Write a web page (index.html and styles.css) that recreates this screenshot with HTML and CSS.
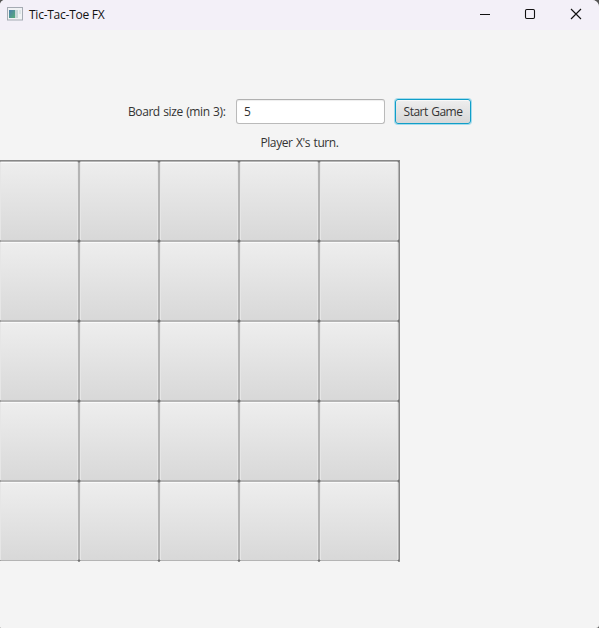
FILE: index.html
```
<!DOCTYPE html>
<html lang="en">
<head>
<meta charset="utf-8">
<title>Tic-Tac-Toe FX</title>
<link rel="stylesheet" href="styles.css">
</head>
<body>
<div class="window">
  <header class="titlebar">
    <svg class="app-icon" width="16" height="14" viewBox="0 0 16 14">
      <defs><linearGradient id="screen" x1="0" y1="0" x2="1" y2="1"><stop offset="0" stop-color="#4b7fad"/><stop offset="1" stop-color="#55ad78"/></linearGradient></defs>
      <rect x=".5" y=".5" width="15" height="12.500" fill="#f0f2f4" stroke="#a5abb3"/>
      <rect x="2" y="3" width="6" height="8" fill="url(#screen)"/>
      <rect x="8" y="3" width="3" height="8" fill="#c5d6d6"/>
      <rect x="12" y="3" width="2" height="4" fill="#dce4e6"/>
    </svg>
    <span class="title">Tic-Tac-Toe FX</span>
    <svg class="controls" width="120" height="28" viewBox="0 0 120 28" fill="none" stroke="#111">
      <path d="M1 14.5h10"/>
      <rect x="46.500" y="9.500" width="9" height="9" rx="1.200" stroke-width="1.100"/>
      <path d="M92 9l10 10M102 9l-10 10" stroke-width="1.150"/>
    </svg>
  </header>
  <main>
    <div class="settings">
      <label class="size-label" for="size">Board size (min 3):</label>
      <input class="size" id="size" value="5">
      <button class="start">Start Game</button>
    </div>
    <p class="status"><span>Player X's turn.</span></p>
    <div class="board">
      <div class="cell"></div><div class="cell"></div><div class="cell"></div><div class="cell"></div><div class="cell"></div>
      <div class="cell"></div><div class="cell"></div><div class="cell"></div><div class="cell"></div><div class="cell"></div>
      <div class="cell"></div><div class="cell"></div><div class="cell"></div><div class="cell"></div><div class="cell"></div>
      <div class="cell"></div><div class="cell"></div><div class="cell"></div><div class="cell"></div><div class="cell"></div>
      <div class="cell"></div><div class="cell"></div><div class="cell"></div><div class="cell"></div><div class="cell"></div>
    </div>
    <div class="board-foot"></div>
  </main>
</div>
</body>
</html>
```

FILE: styles.css
```
* { box-sizing: border-box; }
body { margin: 0; background: #555; overflow: hidden; font: 12px "Open Sans", sans-serif; color: #333; }
.window { height: 628px; background: #f4f4f4; border-radius: 5px 7px 3px 1px; overflow: hidden; }
.titlebar { height: 30px; background: #f3f0f8; display: flex; align-items: flex-start; color: #111; }
.app-icon { margin: 7px 6px 0 7px; }
.title { line-height: 30px; letter-spacing: -0.25px; white-space: nowrap; }
.controls { margin-left: auto; }
.settings { display: flex; align-items: center; height: 27px; margin: 68px 0 0 128px; }
.size-label { width: 108px; letter-spacing: -0.42px; word-spacing: 0.8px; white-space: nowrap; }
.size { width: 149px; height: 25px; padding: 0 7px; border: 1px solid #bababa; border-top-color: #b0b0b0; border-radius: 3px; background: #fff; box-shadow: inset 0 1px 1px #eee; font: inherit; color: #333; outline: 0; }
.start { width: 76px; height: 25px; margin-left: 10px; padding: 0; border: 1px solid #109ec8; border-radius: 3px; background: linear-gradient(#eee, #d8d8d8); box-shadow: 0 0 0 1px #a5dbec, inset 0 1px #f8f8f8; font: inherit; letter-spacing: -0.5px; word-spacing: 0.8px; color: #333; white-space: nowrap; }
.status { margin: 8px 0; height: 19px; line-height: 20px; text-align: center; letter-spacing: -0.4px; word-spacing: 0.7px; }
.board { display: grid; grid-template-columns: repeat(5, 80px); grid-auto-rows: 80px; width: 401px; margin-left: -1px; border-top: 1px solid #888; border-right: 1px solid #888; background: #555; }
.cell { border: 1px solid #b4b4b4; border-radius: 1.500px; background: linear-gradient(#eee, #d8d8d8); box-shadow: inset 1px 0 #e6e6e6, inset -1px 0 #e6e6e6, inset 0 1px #fafafa; }
.board-foot { width: 400px; height: 1px; background: repeating-linear-gradient(90deg, transparent 0 78px, #999 78px 80px); }
```
